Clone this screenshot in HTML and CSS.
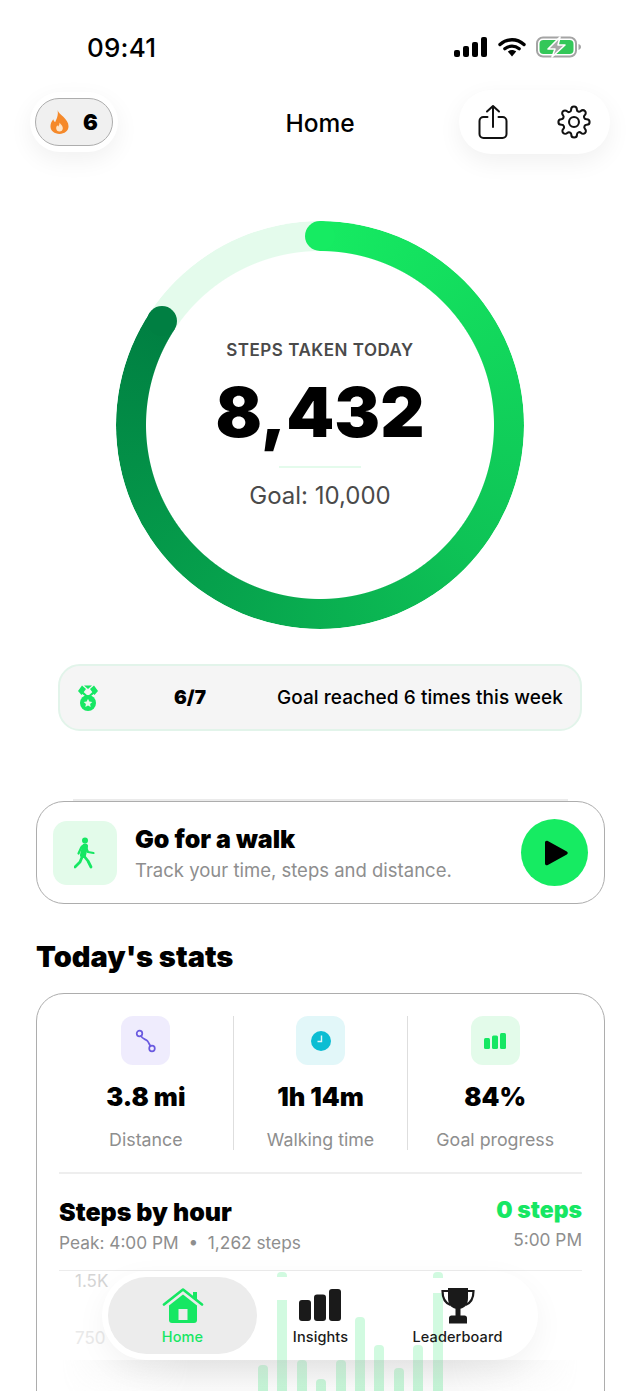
FILE: index.html
```html
<!DOCTYPE html>
<html lang="en">
<head>
    <meta charset="UTF-8">
    <meta name="viewport" content="width=device-width, initial-scale=1.0">
    <title>Home</title>
    <link rel="stylesheet" href="styles.css">
</head>
<body>
    <div class="screen">
        <div class="status-bar">
            <div class="time">09:41</div>
            <div class="status-icons">
                <svg width="34" height="20" viewBox="0 0 34 20"><rect x="0" y="13" width="6" height="7" rx="2" fill="#000"/><rect x="9" y="9" width="6" height="11" rx="2" fill="#000"/><rect x="18" y="5" width="6" height="15" rx="2" fill="#000"/><rect x="27" y="0" width="6" height="20" rx="2" fill="#000"/></svg>
                <svg width="28" height="20" viewBox="0 0 28 20"><path d="M2 7.5C9 1.2 19 1.2 26 7.5" fill="none" stroke="#000" stroke-width="3.4" stroke-linecap="round"/><path d="M6.8 11.8c4.3-3.6 10.1-3.6 14.4 0" fill="none" stroke="#000" stroke-width="3.2" stroke-linecap="round"/><path d="M9.8 14.6c2.6-2 5.8-2 8.4 0L14 19.6z" fill="#000"/></svg>
                <svg width="46" height="22" viewBox="0 0 46 22"><rect x="1" y="1.5" width="39" height="19" rx="6" fill="none" stroke="#a4a4a4" stroke-width="2"/><rect x="3.5" y="4" width="34" height="14" rx="4" fill="#34c759"/><path d="M42.5 8v6c1.5-.4 2.5-1.6 2.5-3s-1-2.6-2.5-3z" fill="#a4a4a4"/><path d="M24 1 12 13h7l-3 8 13-12h-7z" fill="#a9a9a9" stroke="#fff" stroke-width="1.6" stroke-linejoin="round"/></svg>
            </div>
        </div>

        <div class="header">
            <div class="streak-wrap">
                <div class="streak">
                    <svg width="19" height="24" viewBox="0 0 20 25"><path d="M8 0c1 3 3 4 6 7 3 3 5.5 6 5.5 10 0 5-4.3 8-9.5 8S.5 22 .5 17c0-3.5 1.5-5.5 3-7.5.3 1.500 1 2.500 2 3C7 9 9 5 8 0z" fill="#f5892a"/><path d="M10 13c.5 1.5 3.5 3 3.500 6 0 2-1.600 3.500-3.500 3.500S6.500 21 6.500 19c0-1.300.7-2.300 1.300-3 .2.600.5 1 1 1.200.6-1.200 1.400-2.600 1.200-4.200z" fill="#fde4c8"/></svg>
                    <span class="streak-count">6</span>
                </div>
            </div>
            <div class="header-title">Home</div>
            <div class="header-actions">
                <svg width="32" height="36" viewBox="0 0 32 36" fill="none" stroke="#111" stroke-width="2" stroke-linecap="round" stroke-linejoin="round"><path d="M16 23V2M10 7.5 16 2l6 5.5"/><path d="M10.5 13H6.5a4 4 0 0 0-4 4v13a4 4 0 0 0 4 4h19a4 4 0 0 0 4-4V17a4 4 0 0 0-4-4h-4"/></svg>
                <svg width="34" height="34" viewBox="0 0 24 24" fill="none" stroke="#111" stroke-width="1.45" stroke-linecap="round" stroke-linejoin="round"><circle cx="12" cy="12" r="3.5"/><path d="M19.4 15a1.65 1.65 0 0 0 .33 1.82l.06.06a2 2 0 1 1-2.83 2.83l-.06-.06a1.65 1.65 0 0 0-2.8 1.17V21a2 2 0 0 1-4 0v-.09A1.65 1.65 0 0 0 7.3 19.7l-.06.06a2 2 0 1 1-2.83-2.83l.06-.06A1.65 1.65 0 0 0 3.29 14H3a2 2 0 0 1 0-4h.09A1.65 1.65 0 0 0 4.3 7.3l-.06-.06a2 2 0 1 1 2.83-2.83l.06.06A1.65 1.65 0 0 0 10 3.29V3a2 2 0 0 1 4 0v.09a1.65 1.65 0 0 0 2.8 1.17l.06-.06a2 2 0 1 1 2.83 2.83l-.06.06A1.65 1.65 0 0 0 20.71 10H21a2 2 0 0 1 0 4h-.09a1.65 1.65 0 0 0-1.51 1z"/></svg>
            </div>
        </div>

        <div class="ring-section">
            <div class="ring">
                <div class="ring-track"></div>
                <div class="ring-fill"></div>
                <div class="ring-cap ring-cap-start"></div>
                <div class="ring-cap ring-cap-end"></div>
                <div class="ring-inner">
                    <div class="ring-label">STEPS TAKEN TODAY</div>
                    <div class="ring-value">8,432</div>
                    <div class="ring-rule"></div>
                    <div class="ring-goal">Goal: 10,000</div>
                </div>
            </div>
        </div>

        <div class="week-pill">
            <svg class="medal" width="20" height="26" viewBox="0 0 20 26"><path d="M0 6 4 .5l4 3.5L3.5 10zM20 6 16 .5 12 4l4.5 6zM6 .5h8L10 4z" fill="#16e763"/><path d="M5 6.5 10 11l5-4.5 1.5 2L10 13 3.5 8.5z" fill="#16e763"/><circle cx="10" cy="18" r="8" fill="#16e763"/><path d="m10 13.8 1.3 2.7 3 .4-2.2 2 .6 3-2.7-1.5-2.7 1.5.6-3-2.2-2 3-.4z" fill="#e4fbec"/></svg>
            <div class="week-count">6/7</div>
            <div class="week-text">Goal reached 6 times this week</div>
        </div>

        <div class="walk-card">
            <div class="walk-icon">
                <svg width="22" height="32" viewBox="0 0 22 32" fill="none" stroke="#16e763" stroke-linecap="round" stroke-linejoin="round"><circle cx="11" cy="3.5" r="3" fill="#16e763" stroke="none"/><path d="M11 8.5c-2 0-3.5 1-4 2.5l-2.500 5.500" stroke-width="2.2"/><path d="M11 9.5 9 18" stroke-width="6"/><path d="M12 10.500l2 4.500 5.500 1" stroke-width="2.2"/><path d="M8.500 19 6 25l-5 5" stroke-width="2.8"/><path d="M10 19l4 5 3 6" stroke-width="2.8"/></svg>
            </div>
            <div class="walk-copy">
                <div class="walk-title">Go for a walk</div>
                <div class="walk-sub">Track your time, steps and distance.</div>
            </div>
            <div class="play-btn">
                <svg width="26" height="28" viewBox="0 0 26 28"><path d="M2 3.5v21c0 1.5 1.5 2.3 2.8 1.5l19-10.500c1.300-.7 1.300-2.300 0-3L4.800 2C3.500 1.200 2 2 2 3.500z" fill="#000"/></svg>
            </div>
        </div>

        <h2 class="section-title">Today's stats</h2>

        <div class="stats-card">
            <div class="stats-row">
                <div class="stat">
                    <div class="stat-icon stat-icon-purple">
                        <svg width="22" height="26" viewBox="0 0 22 26" fill="none" stroke="#6a5ae0" stroke-width="1.7" stroke-linecap="round"><circle cx="4.5" cy="5.5" r="2.8"/><circle cx="17" cy="20.5" r="2.8"/><path d="M6 8C7.500 11.500 11 11 12.500 13c1.500 2 1.500 3 3 5"/></svg>
                    </div>
                    <div class="stat-value">3.8 mi</div>
                    <div class="stat-label">Distance</div>
                </div>
                <div class="stat">
                    <div class="stat-icon stat-icon-teal">
                        <svg width="20" height="20" viewBox="0 0 20 20"><circle cx="10" cy="10" r="10" fill="#0cbdd3"/><path d="M10.5 4.5V10.5H6.5" fill="none" stroke="#e2f7f9" stroke-width="1.4"/></svg>
                    </div>
                    <div class="stat-value">1h 14m</div>
                    <div class="stat-label">Walking time</div>
                </div>
                <div class="stat">
                    <div class="stat-icon stat-icon-green">
                        <svg width="22" height="16" viewBox="0 0 22 16"><rect x="0" y="5" width="6" height="11" rx="1.5" fill="#16e763"/><rect x="8" y="2.5" width="6" height="13.5" rx="1.5" fill="#16e763"/><rect x="16" y="0" width="6" height="16" rx="1.5" fill="#16e763"/></svg>
                    </div>
                    <div class="stat-value">84%</div>
                    <div class="stat-label">Goal progress</div>
                </div>
            </div>

            <div class="hour-head">
                <div>
                    <div class="hour-title">Steps by hour</div>
                    <div class="hour-sub">Peak: 4:00 PM &nbsp;•&nbsp; 1,262 steps</div>
                </div>
                <div class="hour-right">
                    <div class="hour-now">0 steps</div>
                    <div class="hour-sub">5:00 PM</div>
                </div>
            </div>

            <div class="chart">
                <div class="chart-axis">
                    <span>1.5K</span>
                    <span class="axis-faint">750</span>
                </div>
                <div class="chart-bars">
                    <div class="bar" style="height: 26px"></div>
                    <div class="bar bar-peak" style="height: 119px"></div>
                    <div class="bar" style="height: 31px"></div>
                    <div class="bar" style="height: 12px"></div>
                    <div class="bar" style="height: 31px"></div>
                    <div class="bar" style="height: 74px"></div>
                    <div class="bar" style="height: 46px"></div>
                    <div class="bar" style="height: 23px"></div>
                    <div class="bar" style="height: 46px"></div>
                    <div class="bar bar-peak-high" style="height: 119px"></div>
                </div>
            </div>
        </div>

        <div class="bottom-fade"></div>

        <div class="tab-bar">
            <div class="tab tab-active">
                <svg width="42" height="36" viewBox="0 0 42 36"><path d="M7 17.5 21 6.500l14 11V32a3 3 0 0 1-3 3H10a3 3 0 0 1-3-3z" fill="#16e763"/><path d="M2 16.5 21 1.5l19 15" fill="none" stroke="#16e763" stroke-width="2.6" stroke-linecap="round" stroke-linejoin="round"/><rect x="31" y="4" width="4" height="7" fill="#16e763"/><rect x="16.5" y="21" width="9" height="11" fill="#ececec"/></svg>
                <span>Home</span>
            </div>
            <div class="tab">
                <svg width="43" height="35" viewBox="0 0 43 35"><rect x="0" y="11" width="12" height="21" rx="3" fill="#1a1a1a"/><rect x="15" y="5.5" width="12" height="26.5" rx="3" fill="#1a1a1a"/><rect x="30" y="0" width="12" height="32" rx="3" fill="#1a1a1a"/></svg>
                <span>Insights</span>
            </div>
            <div class="tab">
                <svg width="34" height="37" viewBox="0 0 34 37"><path d="M7 1h20v10c0 7-4 11-10 11S7 18 7 11z" fill="#1a1a1a"/><path d="M7 4H1.5c0 7 2.5 12 8 14M27 4h5.500c0 7-2.500 12-8 14" fill="none" stroke="#1a1a1a" stroke-width="2.2"/><rect x="14.5" y="20" width="5" height="9" fill="#1a1a1a"/><path d="M8 31c0-1.5 1-2.5 2.5-2.5h13c1.5 0 2.5 1 2.5 2.5v5.500H8z" fill="#1a1a1a"/></svg>
                <span>Leaderboard</span>
            </div>
        </div>
    </div>
</body>
</html>
```

FILE: styles.css
```css
* {
    margin: 0;
    padding: 0;
    box-sizing: border-box;
}

html, body {
    background: #fff;
}

body {
    font-family: 'Inter', sans-serif;
    color: #000;
}

.screen {
    position: relative;
    width: 640px;
    height: 1391px;
    overflow: hidden;
    background: #fff;
}

.status-bar {
    display: flex;
    justify-content: space-between;
    align-items: center;
    height: 92px;
    padding: 2px 58px 0 87px;
}

.time {
    font-size: 26px;
    font-weight: 500;
    letter-spacing: 0.2px;
}

.status-icons {
    display: flex;
    align-items: center;
    gap: 10px;
}

.header {
    position: relative;
    display: flex;
    justify-content: space-between;
    align-items: center;
    height: 60px;
    padding: 0 30px;
}

.streak-wrap {
    padding: 6px 5px;
    background: #fff;
    border-radius: 32px;
    box-shadow: 0 8px 24px rgba(0, 0, 0, 0.06);
}

.streak {
    display: flex;
    align-items: center;
    gap: 14px;
    width: 78px;
    height: 48px;
    padding-left: 14px;
    background: #f0f0f0;
    border: 1.5px solid #adadad;
    border-radius: 24px;
}

.streak-count {
    font-size: 22px;
    font-weight: 900;
}

.header-title {
    position: absolute;
    left: 0;
    right: 0;
    padding-top: 2px;
    text-align: center;
    font-size: 24.5px;
    font-weight: 500;
}

.header-actions {
    display: flex;
    align-items: center;
    gap: 48px;
    height: 64px;
    padding: 0 19px 0 18px;
    background: #fff;
    border-radius: 32px;
    box-shadow: 0 8px 24px rgba(0, 0, 0, 0.06);
}

.ring-section {
    display: flex;
    justify-content: center;
    margin-top: 69px;
}

.ring {
    position: relative;
    width: 408px;
    height: 408px;
}

.ring-track,
.ring-fill {
    position: absolute;
    inset: 0;
    border-radius: 50%;
    -webkit-mask: radial-gradient(circle, transparent 173.5px, #000 174.5px);
    mask: radial-gradient(circle, transparent 173.5px, #000 174.5px);
}

.ring-track {
    background: #e4fbec;
}

.ring-fill {
    background: conic-gradient(#16eb62 0deg, #0ec356 130deg, #06a04c 215deg, #007f42 303.5deg, transparent 303.6deg);
}

.ring-cap {
    position: absolute;
    width: 30px;
    height: 30px;
    border-radius: 50%;
}

.ring-cap-start {
    left: 189px;
    top: 0;
    background: #16eb62;
}

.ring-cap-end {
    left: 31px;
    top: 85px;
    background: #007f42;
}

.ring-inner {
    position: absolute;
    inset: 0;
    display: flex;
    flex-direction: column;
    align-items: center;
    padding-top: 119px;
}

.ring-label {
    font-size: 17px;
    font-weight: 600;
    color: #4a4a4a;
    letter-spacing: 0.5px;
}

.ring-value {
    font-size: 68.5px;
    font-weight: 900;
    line-height: 81px;
    margin-top: 12px;
}

.ring-rule {
    width: 82px;
    height: 2px;
    margin-top: 13px;
    background: #e4fbec;
}

.ring-goal {
    margin-top: 13px;
    font-size: 24px;
    color: #4a4a4a;
}

.week-pill {
    display: flex;
    align-items: center;
    height: 67px;
    margin: 35px 58px 0;
    padding: 0 17px 0 18px;
    background: #f5f5f5;
    border: 2px solid #e2f4ea;
    border-radius: 22px;
}

.week-count {
    margin-left: 76px;
    font-size: 19px;
    font-weight: 900;
}

.week-text {
    margin-left: auto;
    font-size: 19px;
    font-weight: 500;
    letter-spacing: 0.07px;
}

.walk-card {
    position: relative;
    display: flex;
    align-items: center;
    height: 103px;
    margin: 70px 35px 0 36px;
    padding: 0 16px;
    border: 1.5px solid #adadad;
    border-radius: 28px;
    background: #fff;
}

.walk-card::before {
    content: '';
    position: absolute;
    top: -3px;
    left: 36px;
    right: 36px;
    height: 2px;
    background: #ebebeb;
}

.walk-icon {
    display: flex;
    align-items: center;
    justify-content: center;
    width: 64px;
    height: 64px;
    background: #e3fbea;
    border-radius: 14px;
}

.walk-copy {
    flex: 1;
    margin-left: 18px;
}

.walk-title {
    font-size: 25px;
    font-weight: 900;
    line-height: 30px;
}

.walk-sub {
    margin-top: 5px;
    font-size: 18.5px;
    color: #8e8e8e;
}

.play-btn {
    display: flex;
    align-items: center;
    justify-content: center;
    width: 67px;
    height: 67px;
    padding-left: 3px;
    background: #16eb62;
    border-radius: 50%;
}

.section-title {
    margin: 36px 36px 0;
    font-size: 29px;
    font-weight: 900;
    line-height: 34px;
}

.stats-card {
    height: 500px;
    margin: 19px 35px 0 36px;
    padding: 22px 22px 0;
    border: 1.5px solid #adadad;
    border-radius: 28px;
    background: #fff;
}

.stats-row {
    display: flex;
    height: 158px;
    padding-bottom: 22px;
    border-bottom: 2px solid #eeeeee;
}

.stat {
    flex: 1;
    display: flex;
    flex-direction: column;
    align-items: center;
    border-right: 1px solid #dedede;
}

.stat:last-child {
    border-right: none;
}

.stat-icon {
    display: flex;
    align-items: center;
    justify-content: center;
    width: 49px;
    height: 49px;
    border-radius: 12px;
}

.stat-icon-purple {
    background: #efecfd;
}

.stat-icon-teal {
    background: #e2f7f9;
}

.stat-icon-green {
    background: #e3fbea;
}

.stat-value {
    margin-top: 16px;
    font-size: 25.5px;
    font-weight: 900;
    line-height: 32px;
}

.stat-label {
    margin-top: 16px;
    font-size: 17.8px;
    color: #8e8e8e;
}

.hour-head {
    display: flex;
    justify-content: space-between;
    height: 97px;
    padding-top: 22px;
    border-bottom: 1px solid #ececec;
}

.hour-title {
    font-size: 25px;
    font-weight: 900;
    line-height: 32px;
}

.hour-sub {
    margin-top: 4px;
    font-size: 17.3px;
    color: #8e8e8e;
}

.hour-right {
    margin-top: -2px;
    text-align: right;
}

.hour-right .hour-sub {
    margin-top: 3px;
}

.hour-now {
    font-size: 23px;
    font-weight: 900;
    line-height: 32px;
    color: #16e763;
}

.chart {
    display: flex;
}

.chart-axis {
    display: flex;
    flex-direction: column;
    gap: 37px;
    width: 199px;
    padding-left: 16px;
    font-size: 17px;
    color: #d4d4d4;
}

.axis-faint {
    color: #e9e9e9;
}

.chart-bars {
    display: flex;
    align-items: flex-end;
    gap: 9.4px;
    height: 120px;
}

.bar {
    width: 10px;
    background: #86f2ae;
    border-radius: 4px 4px 0 0;
}

.bar-peak {
    background: linear-gradient(#86f2ae 0 5px, transparent 5px 28px, #86f2ae 28px);
}

.bar-peak-high {
    background: linear-gradient(#86f2ae 0 6px, transparent 6px 21px, #86f2ae 21px);
}

.bottom-fade {
    position: absolute;
    left: 60px;
    right: 60px;
    bottom: 0;
    height: 31px;
    background: linear-gradient(to bottom, rgba(232, 232, 232, 0.7), rgba(245, 245, 245, 0.55));
    -webkit-mask-image: linear-gradient(to right, transparent, #000 25%, #000 75%, transparent);
    mask-image: linear-gradient(to right, transparent, #000 25%, #000 75%, transparent);
}

.tab-bar {
    position: absolute;
    left: 102px;
    top: 1271px;
    display: grid;
    grid-template-columns: 149px 127px 147px;
    align-items: center;
    width: 436px;
    height: 89px;
    padding: 0 6px;
    background: rgba(255, 255, 255, 0.62);
    border-radius: 45px;
    box-shadow: 0 10px 30px rgba(0, 0, 0, 0.05);
}

.tab {
    display: flex;
    flex-direction: column;
    align-items: center;
    justify-content: flex-end;
    gap: 4px;
    height: 77px;
    padding-bottom: 9px;
    font-size: 14.5px;
    font-weight: 500;
    letter-spacing: 0.1px;
    color: #1a1a1a;
}

.tab-active {
    background: #ececec;
    border-radius: 39px;
    color: #16e763;
}
```
